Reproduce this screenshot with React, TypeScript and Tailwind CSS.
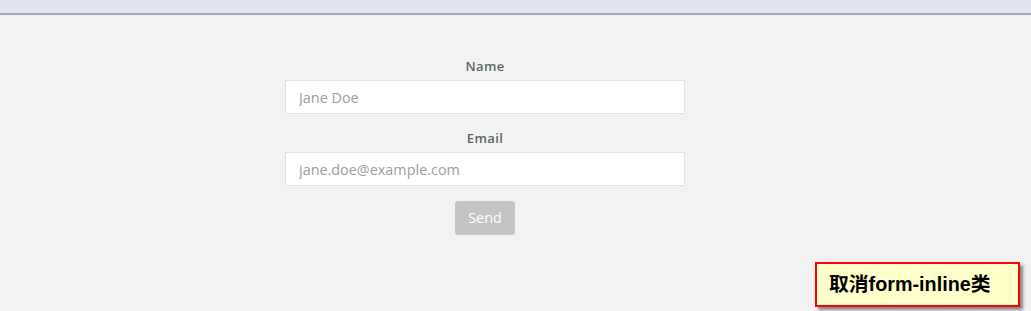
import React from "react";

export default function App() {
  return (
    <div className="relative w-[1031px] h-[311px] bg-[#f2f2f2] overflow-hidden" style={{ fontFamily: '"Open Sans", sans-serif' }}>
      <div className="h-[15px] bg-[#e1e4ef] border-b-2 border-[#a0a6b6]" />
      <form className="w-[400px] ml-[285px] mt-[42px] flex flex-col items-center">
        <label className="text-[13px] font-semibold text-[#5a675f] leading-[18px] tracking-[0.4px]">Name</label>
        <input
          className="mt-[5px] w-[400px] h-[34px] bg-white border border-[#e3e3e3] px-[13px] text-[14.4px] text-[#555] placeholder:text-[#a09c98] outline-none"
          placeholder="Jane Doe"
        />
        <label className="mt-[15px] text-[13px] font-semibold text-[#5a675f] leading-[18px] tracking-[0.4px]">Email</label>
        <input
          className="mt-[5px] w-[400px] h-[34px] bg-white border border-[#e3e3e3] px-[13px] text-[14.4px] text-[#555] placeholder:text-[#a09c98] outline-none"
          placeholder="jane.doe@example.com"
        />
        <button
          type="button"
          className="mt-[15px] w-[60px] h-[34px] rounded-[3px] bg-[#c4c4c4] text-white text-[14.4px]"
        >
          Send
        </button>
      </form>
      <div
        className="absolute left-[815px] top-[262px] w-[205px] h-[45px] bg-[#ffffcc] border-2 border-[#ff0000] shadow-[3px_3px_3px_rgba(0,0,0,0.45)] flex items-center pl-[12px] text-[19.8px] font-bold text-black"
        style={{ fontFamily: '"Liberation Sans", "Noto Sans CJK SC", sans-serif' }}
      >
        取消form-inline类
      </div>
    </div>
  );
}
